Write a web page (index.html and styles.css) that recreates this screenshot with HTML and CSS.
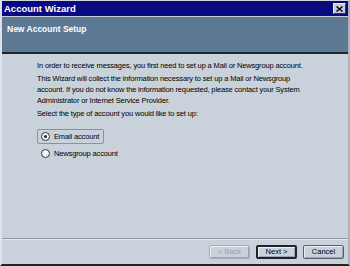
FILE: index.html
```html
<!DOCTYPE html>
<html lang="en">
<head>
    <meta charset="UTF-8">
    <title>Account Wizard</title>
    <link rel="stylesheet" href="styles.css">
</head>
<body>
    <div class="window">
        <div class="titlebar">
            <span class="title-text">Account Wizard</span>
            <div class="close-btn">
                <svg width="7" height="6" viewBox="0 0 7 6"><path d="M0.5 0.5 L6.5 5.5 M6.5 0.5 L0.5 5.5" stroke="#000" stroke-width="1.4"/></svg>
            </div>
        </div>
        <div class="header">New Account Setup</div>
        <div class="content">
            <p>In order to receive messages, you first need to set up a Mail or Newsgroup account.</p>
            <p>This Wizard will collect the information necessary to set up a Mail or Newsgroup account. If you do not know the information requested, please contact your System Administrator or Internet Service Provider.</p>
            <p>Select the type of account you would like to set up:</p>
            <div class="options">
                <div class="option focused">
                    <span class="radio checked"></span>
                    <span>Email account</span>
                </div>
                <div class="option">
                    <span class="radio"></span>
                    <span>Newsgroup account</span>
                </div>
            </div>
        </div>
        <div class="footer">
            <button class="btn disabled">&lt; Back</button>
            <button class="btn default">Next &gt;</button>
            <button class="btn">Cancel</button>
        </div>
    </div>
</body>
</html>
```

FILE: styles.css
```css
body {
    margin: 0;
    padding: 0;
    font-family: "Liberation Sans", Arial, sans-serif;
    font-size: 7.5px;
    letter-spacing: -0.15px;
    background-color: #c9d1db;
}
.window {
    width: 350px;
    height: 266px;
    box-sizing: border-box;
    display: flex;
    flex-direction: column;
    border-top: 1px solid #d4d8de;
    border-left: 2px solid #dde2e8;
    border-right: 2px solid #aab3be;
    border-bottom: 2px solid #202428;
    background-color: #c9d1db;
}
.titlebar {
    height: 15px;
    background-color: #0a0a80;
    color: #fff;
    display: flex;
    align-items: center;
    justify-content: space-between;
    padding: 0 2px 0 2px;
}
.title-text {
    font-weight: bold;
    font-size: 9.5px;
    letter-spacing: 0;
}
.close-btn {
    width: 11px;
    height: 9px;
    background-color: #c6ccd4;
    border: 1px solid #e8ecf0;
    border-right-color: #303840;
    border-bottom-color: #303840;
    display: flex;
    align-items: center;
    justify-content: center;
}
.header {
    margin-top: 1px;
    height: 37px;
    box-sizing: border-box;
    background-color: #5d7893;
    border-bottom: 2px solid #1c2633;
    color: #fff;
    font-weight: bold;
    font-size: 8.5px;
    letter-spacing: 0;
    padding-left: 5px;
    padding-bottom: 11px;
    display: flex;
    align-items: center;
}
.content {
    flex: 1;
    padding: 6px 44px 0 35px;
    color: #000;
    line-height: 11px;
}
.content p {
    margin: 0 0 2px 0;
}
.options {
    margin-top: 10px;
}
.option {
    display: flex;
    align-items: center;
    gap: 4px;
    width: max-content;
    height: 11px;
    padding: 1px 4px 1px 3px;
    margin-bottom: 2px;
    border: 1px solid transparent;
    border-radius: 2px;
}
.option.focused {
    border-color: #8a929c;
}
.radio {
    width: 7px;
    height: 7px;
    border: 1px solid #303840;
    border-radius: 50%;
    background-color: #f2f4f6;
    display: flex;
    align-items: center;
    justify-content: center;
}
.radio.checked::after {
    content: "";
    width: 3px;
    height: 3px;
    border-radius: 50%;
    background-color: #202428;
}
.footer {
    border-top: 1px solid #8d96a2;
    box-shadow: inset 0 1px 0 #e4e8ec;
    height: 25px;
    display: flex;
    justify-content: flex-end;
    align-items: center;
    gap: 6px;
    padding-right: 4px;
}
.btn {
    width: 41px;
    height: 14px;
    padding: 0;
    font-family: "Liberation Sans", Arial, sans-serif;
    font-size: 7.5px;
    background-color: #c9d1db;
    border: 1px solid #58606a;
    border-radius: 2px;
    box-shadow: inset 1px 1px 0 #eef1f4, inset -1px -1px 0 #9aa3ae;
    color: #000;
}
.btn.default {
    border: 2px solid #202428;
}
.btn.disabled {
    color: #98a1ac;
    border-color: #a3acb7;
}
```
